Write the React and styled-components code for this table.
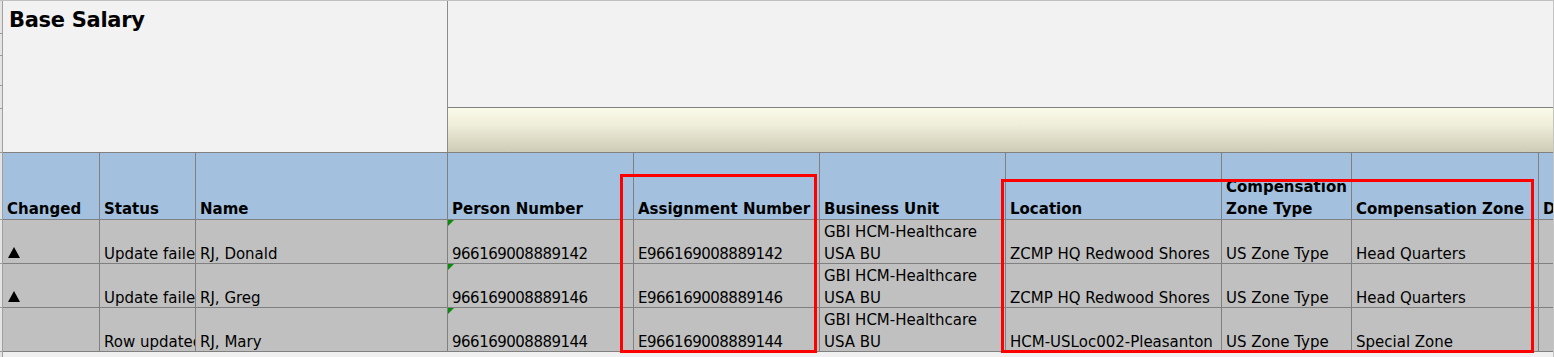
import styled, { createGlobalStyle } from "styled-components"

const GlobalStyle = createGlobalStyle`
    html, body {
        margin: 0;
        padding: 0;
        background: #f2f2f2;
    }
    * {
        box-sizing: border-box;
    }
`

const columns = [
    { key: 'changed', label: 'Changed', width: 97 },
    { key: 'status', label: 'Status', width: 96 },
    { key: 'name', label: 'Name', width: 252 },
    { key: 'person', label: 'Person Number', width: 186, numeric: true, flagged: true },
    { key: 'assignment', label: 'Assignment Number', width: 186, numeric: true },
    { key: 'unit', label: 'Business Unit', width: 186 },
    { key: 'location', label: 'Location', width: 216 },
    { key: 'zoneType', label: 'Compensation Zone Type', width: 130 },
    { key: 'zone', label: 'Compensation Zone', width: 187 },
    { key: 'd', label: 'D', width: 14, last: true },
]

const rows = [
    {
        changed: true, status: 'Update failed', name: 'RJ, Donald', person: '966169008889142',
        assignment: 'E966169008889142', unit: 'GBI HCM-Healthcare USA BU',
        location: 'ZCMP HQ Redwood Shores', zoneType: 'US Zone Type', zone: 'Head Quarters', d: '',
    },
    {
        changed: true, status: 'Update failed', name: 'RJ, Greg', person: '966169008889146',
        assignment: 'E966169008889146', unit: 'GBI HCM-Healthcare USA BU',
        location: 'ZCMP HQ Redwood Shores', zoneType: 'US Zone Type', zone: 'Head Quarters', d: '',
    },
    {
        changed: false, status: 'Row updated', name: 'RJ, Mary', person: '966169008889144',
        assignment: 'E966169008889144', unit: 'GBI HCM-Healthcare USA BU',
        location: 'HCM-USLoc002-Pleasanton', zoneType: 'US Zone Type', zone: 'Special Zone', d: '',
    },
]

// row header strip on the left: heights of the (mostly hidden) spreadsheet rows
const gutterRows = [33, 22, 30, 23, 44, 67, 44, 44, 44]

const renderValue = (row, c) => {
    if (c.key === 'changed') return row.changed ? <ChangedMark /> : null
    return <CellText $numeric={c.numeric} $wrap={c.key === 'unit'}>{row[c.key]}</CellText>
}

const App = () => {
    const template = columns.map(c => `${c.width}px`).join(' ')

    return (
        <>
            <GlobalStyle />
            <Sheet>
                <Gutter>
                    {gutterRows.map((h, i) => <GutterCell key={i} $h={h} />)}
                </Gutter>
                <Main>
                    <Banner>
                        <TitleCell>
                            <Title>Base Salary</Title>
                        </TitleCell>
                        <BannerRight>
                            <Spacer />
                            <Band />
                        </BannerRight>
                    </Banner>
                    <Grid $template={template}>
                        {columns.map(c => (
                            <HeadCell key={c.key} $last={c.last}>
                                <HeadText>{c.label}</HeadText>
                            </HeadCell>
                        ))}
                        {rows.map((row, r) => columns.map(c => (
                            <Cell key={`${r}-${c.key}`} $last={c.last}>
                                {c.flagged && <Flag />}
                                {renderValue(row, c)}
                            </Cell>
                        )))}
                    </Grid>
                </Main>
                <Highlight style={{ left: 620, top: 173, width: 197, height: 179 }} />
                <Highlight style={{ left: 1001, top: 178, width: 533, height: 174 }} />
            </Sheet>
        </>
    )
}

const Sheet = styled.div`
    position: relative;
    display: flex;
    width: 1554px;
    height: 357px;
    overflow: hidden;
    background: #f0f0f0;
    border-top: 1px solid #c0c0c0;
    border-right: 1px solid #c4c4c4;
    font-family: "DejaVu Sans", Verdana, sans-serif;
    color: #000;
`
const Gutter = styled.div`
    display: flex;
    flex-direction: column;
    width: 3px;
    flex-shrink: 0;
    background: #e4e4e4;
    border-right: 1px solid #a0a0a0;
`
const GutterCell = styled.div`
    height: ${p => p.$h}px;
    border-bottom: 1px solid #9a9a9a;
`
const Main = styled.div`
    display: flex;
    flex-direction: column;
    flex: 1;
    min-width: 0;
`
const Banner = styled.div`
    display: flex;
    height: 152px;
    background: #f2f2f2;
    border-bottom: 1px solid #808080;
`
const TitleCell = styled.div`
    width: 445px;
    flex-shrink: 0;
    border-right: 1px solid #8c8c8c;
    padding: 7px 6px 0;
`
const Title = styled.h1`
    margin: 0;
    font-size: 21px;
    line-height: 24px;
    font-weight: bold;
    letter-spacing: -0.3px;
`
const BannerRight = styled.div`
    display: flex;
    flex-direction: column;
    flex: 1;
`
const Spacer = styled.div`
    flex: 1;
`
const Band = styled.div`
    height: 45px;
    border-top: 1px solid #808080;
    background: linear-gradient(to bottom, #fbfbea 0%, #eeedd9 40%, #cecbb6 100%);
`
const Grid = styled.div`
    display: grid;
    grid-template-columns: ${p => p.$template};
    grid-template-rows: 67px repeat(3, 44px);
`
const HeadCell = styled.div`
    display: flex;
    align-items: flex-end;
    background: #a3c1df;
    border-bottom: 1px solid #808080;
    border-right: ${p => p.$last ? 'none' : '1px solid #808080'};
    padding: 0 2px 0 4px;
    overflow: hidden;
`
const HeadText = styled.div`
    font-size: 15px;
    font-weight: bold;
    line-height: 22px;
    margin-bottom: -1px;
`
const Cell = styled.div`
    position: relative;
    display: flex;
    align-items: flex-end;
    background: #c0c0c0;
    border-bottom: 1px solid #808080;
    border-right: ${p => p.$last ? 'none' : '1px solid #808080'};
    padding: 0 0 0 4px;
    overflow: hidden;
`
const CellText = styled.div`
    font-size: 15px;
    line-height: 22px;
    margin-bottom: -2px;
    white-space: ${p => p.$wrap ? 'normal' : 'nowrap'};
    letter-spacing: ${p => p.$numeric ? '-0.5px' : '0'};
`
const ChangedMark = styled.span`
    width: 0;
    height: 0;
    margin: 0 0 5px 1px;
    border-left: 6px solid transparent;
    border-right: 6px solid transparent;
    border-bottom: 11px solid #000;
`
const Flag = styled.span`
    position: absolute;
    top: 0;
    left: 0;
    width: 0;
    height: 0;
    border-top: 6px solid #0a8a0a;
    border-right: 6px solid transparent;
`
const Highlight = styled.div`
    position: absolute;
    border: 3px solid #ff0000;
    pointer-events: none;
`

export default App
